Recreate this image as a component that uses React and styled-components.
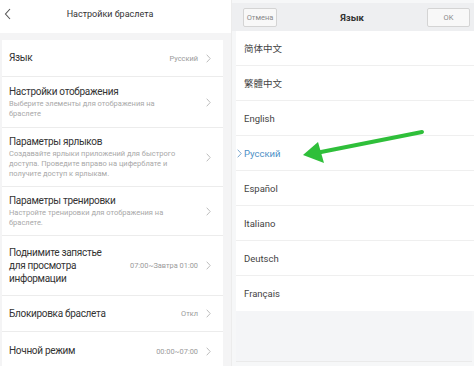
import React from 'react';
import styled, { createGlobalStyle } from 'styled-components';

const GlobalStyle = createGlobalStyle`
  html, body {
    margin: 0;
    padding: 0;
    background: #ffffff;
    font-family: Roboto, "Noto Sans", "Noto Sans CJK SC", sans-serif;
  }
`;

const Page = styled.div`
  display: flex;
  width: 474px;
  height: 366px;
  overflow: hidden;
`;

const LeftPanel = styled.div`
  width: 231px;
  flex-shrink: 0;
  background: #f4f4f5;
  display: flex;
  flex-direction: column;
  border-right: 1px solid #ececec;
`;

const Header = styled.div`
  height: 33px;
  flex-shrink: 0;
  box-sizing: border-box;
  padding: 0 11px 5px 0;
  background: #ffffff;
  display: flex;
  align-items: center;
  justify-content: center;
  position: relative;
  font-size: 9px;
  color: #333;
`;

const BackIcon = styled.svg`
  position: absolute;
  left: 4px;
  top: 8px;
`;

const Card = styled.div`
  margin: 7px 8px 0 2px;
  background: #ffffff;
  flex: 1;
`;

const Row = styled.div`
  display: flex;
  align-items: center;
  padding: ${(p) => p.pad}px 12px ${(p) => p.pad}px 7px;
  border-bottom: ${(p) => (p.last ? 'none' : '1px solid #ececec')};
`;

const TextCol = styled.div`
  flex: 1;
  min-width: 0;
`;

const Title = styled.div`
  font-size: 10px;
  letter-spacing: -0.3px;
  color: #333;
  max-width: ${(p) => (p.narrow ? '98px' : 'none')};
  line-height: ${(p) => (p.narrow ? '13px' : '14px')};
`;

const Sub = styled.div`
  font-size: 7.5px;
  line-height: 10px;
  color: #a8a8a8;
  max-width: 178px;
`;

const Value = styled.span`
  font-size: 7.4px;
  color: #9a9a9a;
  margin-right: 8px;
  white-space: nowrap;
`;

const Chevron = ({ color = '#bdbdbd' }) => (
  <svg width="5" height="9" viewBox="0 0 5 9">
    <path d="M0.7 0.7 L4.2 4.5 L0.7 8.3" fill="none" stroke={color} strokeWidth="1" />
  </svg>
);

const RightPanel = styled.div`
  flex: 1;
  background: #f6f7f8;
  display: flex;
  flex-direction: column;
  padding-top: 3px;
  position: relative;
`;

const Bar = styled.div`
  height: 28px;
  flex-shrink: 0;
  background: #eeeff1;
  display: flex;
  align-items: center;
  justify-content: space-between;
  padding: 0 4px 0 11px;
`;

const BarButton = styled.div`
  height: 19px;
  min-width: ${(p) => p.w}px;
  box-sizing: border-box;
  border: 1px solid #d4d4d4;
  background: #f8f8f8;
  border-radius: 2px;
  display: flex;
  align-items: center;
  justify-content: center;
  font-size: 7.5px;
  color: #8a8a8a;
`;

const BarTitle = styled.div`
  font-size: 9.5px;
  font-weight: 700;
  color: #333;
`;

const List = styled.div`
  margin-left: 4px;
  background: #ffffff;
`;

const LangRow = styled.div`
  height: 35px;
  box-sizing: border-box;
  display: flex;
  align-items: center;
  padding-left: 8px;
  border-bottom: ${(p) => (p.last ? 'none' : '1px solid #efefef')};
  font-size: 9.5px;
  color: ${(p) => (p.active ? '#4b8fc6' : '#444')};
  position: relative;
`;

const ActiveMark = styled.span`
  position: absolute;
  left: 1px;
  top: 13px;
`;

const Arrow = styled.svg`
  position: absolute;
  left: 70px;
  top: 125px;
`;

const Footer = styled.div`
  margin: 0 2px 4px 4px;
  flex: 1;
  background: #f4f5f7;
  border-bottom: 1px solid #eaeaea;
`;

const settings = [
  { title: 'Язык', value: 'Русский', pad: 11 },
  { title: 'Настройки отображения', sub: 'Выберите элементы для отображения на браслете', pad: 8 },
  {
    title: 'Параметры ярлыков',
    sub: 'Создавайте ярлыки приложений для быстрого доступа. Проведите вправо на циферблате и получите доступ к ярлыкам.',
    pad: 7,
  },
  { title: 'Параметры тренировки', sub: 'Настройте тренировки для отображения на браслете.', pad: 7 },
  { title: 'Поднимите запястье для просмотра информации', value: '07:00~Завтра 01:00', narrow: true, pad: 10 },
  { title: 'Блокировка браслета', value: 'Откл', pad: 10.5 },
  { title: 'Ночной режим', value: '00:00~07:00', pad: 12, last: true },
];

const languages = ['简体中文', '繁體中文', 'English', 'Русский', 'Español', 'Italiano', 'Deutsch', 'Français'];

export default function App() {
  return (
    <Page>
      <GlobalStyle />
      <LeftPanel>
        <Header>
          <BackIcon width="8" height="12" viewBox="0 0 8 12">
            <path d="M6 1 L1.5 6 L6 11" fill="none" stroke="#555" strokeWidth="1.1" />
          </BackIcon>
          Настройки браслета
        </Header>
        <Card>
          {settings.map((s) => (
            <Row key={s.title} pad={s.pad} last={s.last}>
              <TextCol>
                <Title narrow={s.narrow}>{s.title}</Title>
                {s.sub && <Sub>{s.sub}</Sub>}
              </TextCol>
              {s.value && <Value>{s.value}</Value>}
              <Chevron />
            </Row>
          ))}
        </Card>
      </LeftPanel>
      <RightPanel>
        <Bar>
          <BarButton w={34}>Отмена</BarButton>
          <BarTitle>Язык</BarTitle>
          <BarButton w={43}>OK</BarButton>
        </Bar>
        <List>
          {languages.map((l, i) => (
            <LangRow key={l} active={l === 'Русский'} last={i === languages.length - 1}>
              {l === 'Русский' && (
                <ActiveMark>
                  <Chevron color="#7aa7d0" />
                </ActiveMark>
              )}
              {l}
            </LangRow>
          ))}
        </List>
        <Footer />
        <Arrow width="125" height="40" viewBox="0 0 125 40">
          <line x1="120" y1="7" x2="14" y2="28" stroke="#2fbf3a" strokeWidth="4" strokeLinecap="round" />
          <polygon points="1,30 16,17 22,38" fill="#2fbf3a" />
        </Arrow>
      </RightPanel>
    </Page>
  );
}
